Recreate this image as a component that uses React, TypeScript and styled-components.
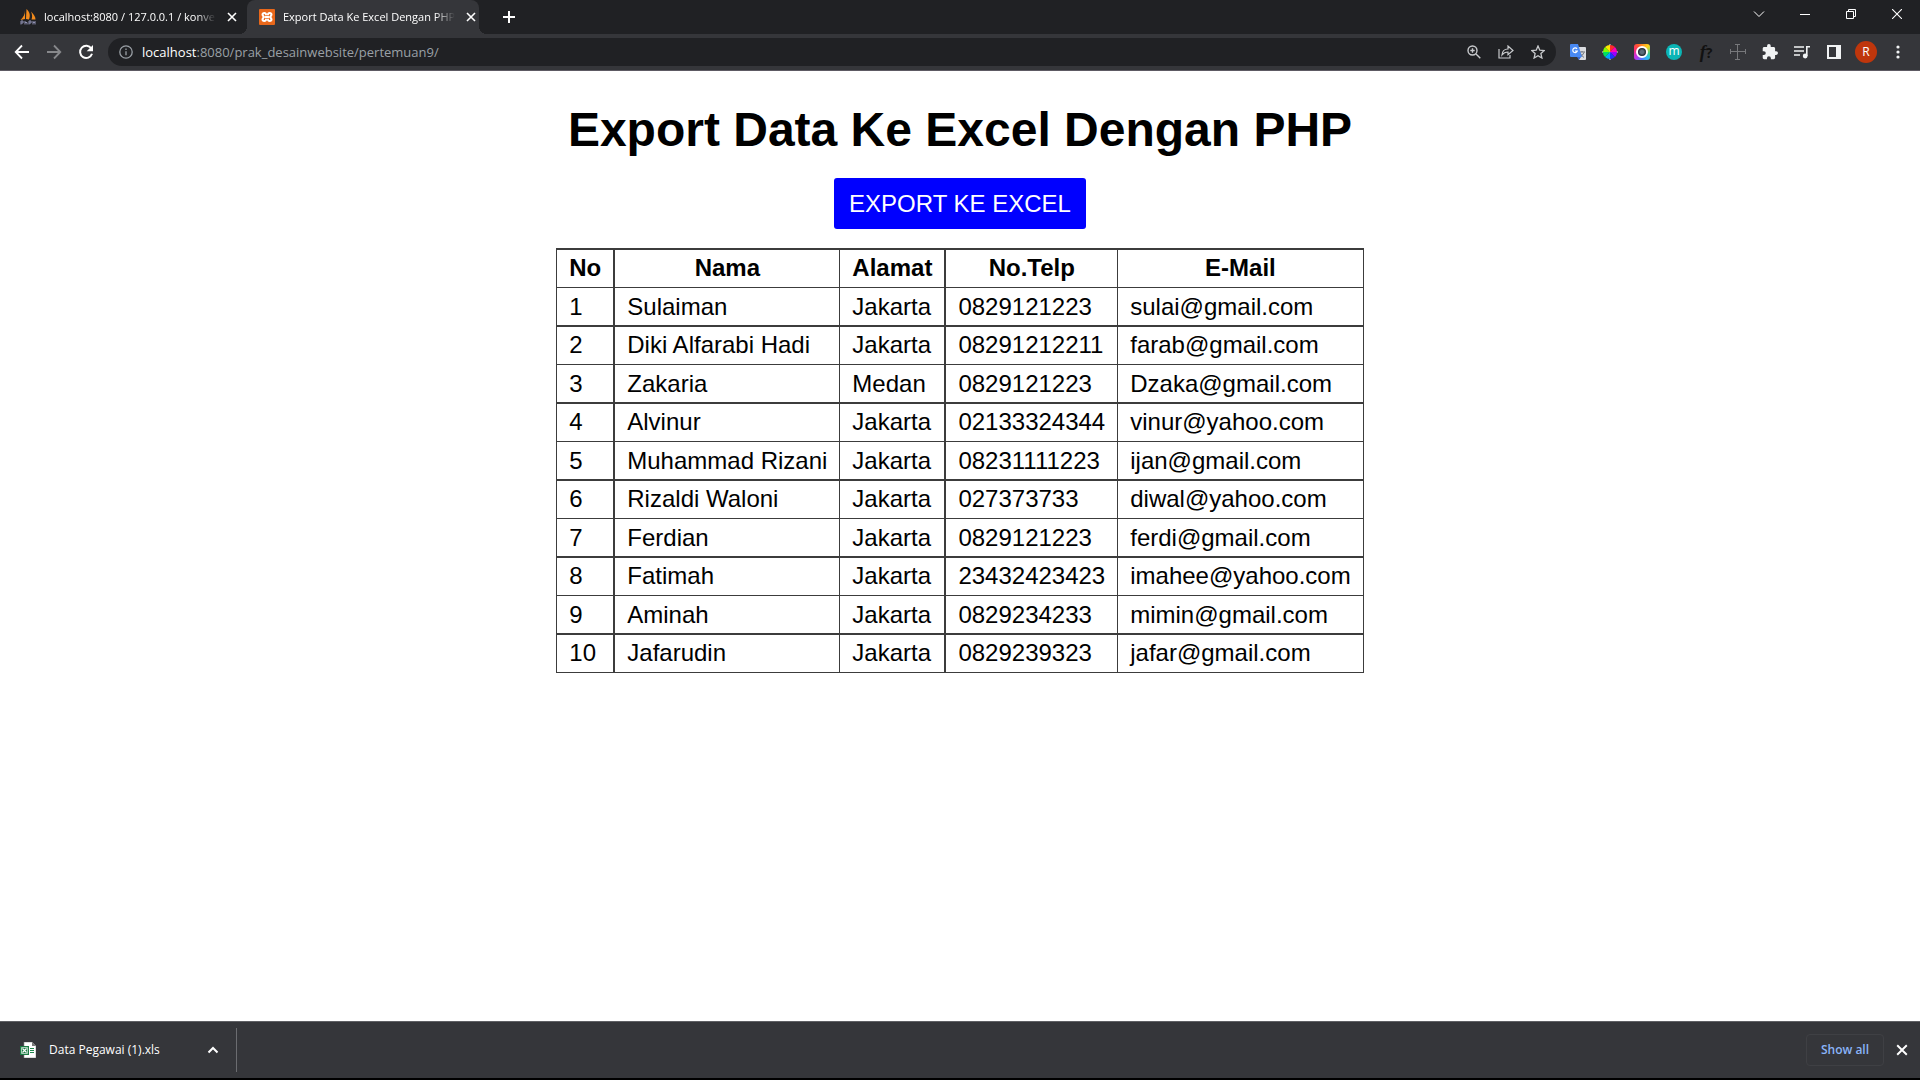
import React from 'react';
import styled, { createGlobalStyle, css } from 'styled-components';

const Global = createGlobalStyle`
  *, *::before, *::after { box-sizing: border-box; }
  body { margin: 0; background: #fff; }
  button, input { font: inherit; }
`;

const Screen = styled.div`
  min-height: 100vh;
  display: flex;
  flex-direction: column;
  border-bottom: 2px solid #000;
  font-family: 'Open Sans', 'Noto Sans', sans-serif;
  color: #fff;
`;

const TabStrip = styled.header`
  height: 34px;
  display: flex;
  align-items: stretch;
  background: #202124;
`;

const Tab = styled.div<{ $active?: boolean }>`
  position: relative;
  width: ${(p) => (p.$active ? 232 : 247)}px;
  display: flex;
  align-items: center;
  gap: 8px;
  padding: ${(p) => (p.$active ? '0 0 0 12px' : '0 7px 0 20px')};
  background: ${(p) => (p.$active ? '#35363a' : 'transparent')};
  border-radius: 8px 8px 0 0;
  font-size: 11px;
  line-height: 18px;

  ${(p) =>
    p.$active &&
    css`
      &::before,
      &::after {
        content: '';
        position: absolute;
        bottom: 0;
        width: 8px;
        height: 8px;
      }
      &::before {
        left: -8px;
        background: radial-gradient(circle at 0 0, #202124 8px, #35363a 8px);
      }
      &::after {
        right: -8px;
        background: radial-gradient(circle at 100% 0, #202124 8px, #35363a 8px);
      }
    `}
`;

const TabTitle = styled.span`
  flex: 1;
  min-width: 0;
  overflow: hidden;
  white-space: nowrap;
  mask-image: linear-gradient(to right, #000 calc(100% - 20px), transparent);
`;

const IconButton = styled.button<{ $w?: number }>`
  width: ${(p) => p.$w ?? 32}px;
  flex: none;
  display: flex;
  align-items: center;
  justify-content: center;
  padding: 0;
  border: 0;
  background: none;
  color: inherit;
`;

const WindowControls = styled.div`
  margin-left: auto;
  height: 28px;
  display: flex;
`;

const Toolbar = styled.nav`
  height: 37px;
  display: flex;
  align-items: center;
  padding: 0 6px;
  background: #35363a;
  border-bottom: 1px solid #5d5a63;
`;

const AddressBar = styled.div`
  flex: 1;
  height: 28px;
  margin: 0 6px;
  display: flex;
  align-items: center;
  padding: 0 2px 0 11px;
  border-radius: 14px;
  background: #202124;
  color: #c8cacd;
`;

const Url = styled.a`
  flex: 1;
  margin-left: 9px;
  font-size: 13px;
  line-height: 20px;
  color: #9aa0a6;
  text-decoration: none;
  b { font-weight: 400; color: #fff; }
`;

const Avatar = styled.span`
  width: 22px;
  height: 22px;
  border-radius: 50%;
  background: #bf360c;
  font-size: 12px;
  line-height: 22px;
  text-align: center;
`;

const Page = styled.main`
  flex: 1;
  display: flex;
  flex-direction: column;
  align-items: center;
  padding-top: 31px;
  color: #000;
  font-family: 'Liberation Sans', Arial, sans-serif;
  font-size: 24px;
  line-height: 27px;
`;

const Title = styled.h1`
  margin: 0;
  font-size: 48px;
  line-height: 56px;
`;

const ExportLink = styled.a`
  margin: 20px 0 19px;
  padding: 12px 15px;
  border-radius: 3px;
  background: #00f;
  color: #fff;
  text-decoration: none;
`;

const Table = styled.table`
  border-collapse: separate;
  border-spacing: 0;
  border: solid #3c3c3c;
  border-width: 2px 0 0 1px;

  th, td {
    padding: 5px 12px;
    border: solid #3c3c3c;
    border-width: 0 1px 1px 0;
    text-align: left;
    white-space: nowrap;
  }
  th { text-align: center; }
  th:nth-child(odd):not(:last-child), td:nth-child(odd):not(:last-child) { border-right-width: 2px; }
  th, tbody tr:nth-child(even) td { padding-top: 4px; padding-bottom: 6px; }
  tbody tr:nth-child(odd) td { border-bottom-width: 2px; }
`;

const Downloads = styled.footer`
  height: 57px;
  display: flex;
  align-items: center;
  padding: 0 6px 0 20px;
  background: #35363a;
  border-top: 1px solid #5f6064;
  font-size: 12px;
  line-height: 18px;
`;

const DownloadItem = styled.div`
  width: 217px;
  height: 44px;
  display: flex;
  align-items: center;
  gap: 13px;
  border-right: 1px solid #6b6c70;
`;

const FileName = styled.span`
  flex: 1;
`;

const ShowAll = styled.button`
  width: 78px;
  height: 32px;
  margin: 0 6px 0 auto;
  padding: 0;
  border: 1px solid #3f4044;
  border-radius: 4px;
  background: none;
  color: #8ab4f8;
  font-weight: 600;
`;

const Close = ({ size = 10 }: { size?: number }) => (
  <svg width={size} height={size} viewBox="0 0 10 10" stroke="currentColor" strokeWidth="1.6">
    <path d="M1 1l8 8M9 1l-8 8" />
  </svg>
);

const Sails = () => (
  <svg width="16" height="16" viewBox="0 0 16 16">
    <path d="M5 1.500C5 5 3.500 8 .5 11L5 10zM6.500 0C10 3 10.500 7 9 10.500L6 10zM11 2.500c3 3 4.500 5.500 4.500 8L11.500 10.500c1-2.500.8-5-.5-8z" fill="#f38b1c" />
    <path d="M1 15.500V12h2v2H1M5 12v3.500M5 13.500h2v2M9 12v3.500M9 12h2v2H9M13 12v3.500M15 12v3.500M13 13.500h2" stroke="#8f91b3" fill="none" />
  </svg>
);

const Xampp = () => (
  <svg width="16" height="16" viewBox="0 0 16 16">
    <rect width="16" height="16" rx="1" fill="#e9681b" />
    <path
      d="M7 5.500Q7 4 5.300 4T3.500 5.700L4.700 8 3.500 10.300Q3.500 12 5.300 12T7 10.500M9 5.500Q9 4 10.700 4T12.500 5.700L11.300 8 12.500 10.300Q12.500 12 10.700 12T9 10.500M6.500 8h3"
      stroke="#fff"
      strokeWidth="2"
      fill="none"
      strokeLinejoin="round"
      strokeLinecap="round"
    />
  </svg>
);

const Arrow = ({ back }: { back?: boolean }) => (
  <svg width="16" height="16" viewBox="0 0 16 16" fill="none" stroke={back ? '#fff' : '#87888b'} strokeWidth="1.8">
    <path d={back ? 'M15 8H2M8 1.500L1.700 8 8 14.500' : 'M1 8h13M8 1.500L14.300 8 8 14.500'} />
  </svg>
);

const Reload = () => (
  <svg width="16" height="16" viewBox="0 0 16 16">
    <path d="M13.300 4.500A6.100 6.100 0 1 0 14 9.800" fill="none" stroke="#fff" strokeWidth="2" />
    <path d="M15 1v6.300H8.700z" fill="#fff" />
  </svg>
);

const Info = () => (
  <svg width="14" height="14" viewBox="0 0 14 14" fill="none" stroke="#9aa0a6" strokeWidth="1.3">
    <circle cx="7" cy="7" r="6.200" />
    <path d="M7 6.200v4M7 3.500v1.400" />
  </svg>
);

const ZoomIn = () => (
  <svg width="14" height="14" viewBox="0 0 14 14" fill="none" stroke="currentColor" strokeWidth="1.400">
    <circle cx="5.500" cy="5.500" r="4.500" />
    <path d="M9 9l4.300 4.300M3.300 5.500h4.400M5.500 3.300v4.400" />
  </svg>
);

const Share = () => (
  <svg width="16" height="14" viewBox="0 0 16 14" fill="none" stroke="currentColor" strokeWidth="1.200">
    <path d="M1 4v9h11v-3M4 10c.3-4 2.700-6 6-6V1l5 4.500-5 4.300V7C7.500 7 5.500 8 4 10z" />
  </svg>
);

const Star = () => (
  <svg width="14" height="14" viewBox="0 0 14 14" fill="none" stroke="currentColor" strokeWidth="1.300">
    <path d="M7 1l1.800 4.200 4.500.4-3.400 3 1 4.400L7 10.700 3.100 13l1-4.400-3.400-3 4.500-.4z" />
  </svg>
);

const Translate = () => (
  <svg width="16" height="16" viewBox="0 0 16 16">
    <path d="M6 3h9q1 0 1 1v11q0 1-1 1H9z" fill="#dadce0" />
    <path d="M9 8h6M12 7v1M10 8.500q1 3 4 5M14 8.500q-1 3-4 4" stroke="#70757a" fill="none" />
    <path d="M1 0h7l4 13H1q-1 0-1-1V1q0-1 1-1z" fill="#4889f4" />
    <path d="M7 13h4l-2 3z" fill="#3367d6" />
    <path d="M7 4.900A2.300 2.300 0 1 0 7.300 7H5" fill="none" stroke="#fff" strokeWidth="1.200" />
  </svg>
);

const wheel = ['#ff2b2b', '#ff00b8', '#9900ff', '#2030ff', '#00a8ff', '#00e060', '#7fff00', '#ffe600'];
const Wheel = () => (
  <svg width="16" height="16" viewBox="-8 -8 16 16">
    <path d="M-8 0H8M0-8V8" stroke="#8a8a8a" strokeWidth="2" />
    {wheel.map((c, i) => (
      <path key={c} d="M0 0L0 -7A7 7 0 0 1 5 -5z" fill={c} transform={`rotate(${i * 45})`} />
    ))}
  </svg>
);

const Lens = styled.span`
  width: 16px;
  height: 16px;
  display: flex;
  align-items: center;
  justify-content: center;
  border-radius: 3px;
  background: conic-gradient(#ff8a1c, #ffd21c 45deg, #3fd08a 100deg, #28c0f0 135deg, #4a7bff 180deg, #c430e8 230deg, #ff2f6c 290deg, #ff5a2c 330deg, #ff8a1c);

  &::before {
    content: '';
    width: 12px;
    height: 12px;
    border: 2px solid #fff;
    border-radius: 50%;
    background: radial-gradient(#5b6b78 30%, #1f2830 65%);
  }
`;

const Round = styled.span`
  width: 16px;
  height: 16px;
  border-radius: 50%;
  background: #0bb5b5;
  font-size: 12px;
  line-height: 14px;
  text-align: center;
`;

const Formula = styled.span`
  font: italic 700 18px/20px 'Liberation Serif', serif;
  color: #111;
  b { font: 700 14px/20px 'Open Sans', sans-serif; }
`;

const Crosshair = () => (
  <svg width="16" height="16" viewBox="0 0 16 16" stroke="#77787b" fill="none">
    <path d="M0 7.500h6M10 7.500h6M7.500 0v6M7.500 10v6M5 .5h5M5 15.500h5M.5 5v5M15.500 5v5M6 7.500h4M7.500 6v4" />
  </svg>
);

const Puzzle = () => (
  <svg width="16" height="16" viewBox="1 1 22 22" fill="#f1f3f4">
    <path d="M20.500 11H19V7c0-1.100-.9-2-2-2h-4V3.500a2.500 2.500 0 0 0-5 0V5H4c-1.100 0-2 .9-2 2v3.800h1.500a2.700 2.700 0 0 1 0 5.400H2V20c0 1.100.9 2 2 2h3.800v-1.500a2.700 2.700 0 0 1 5.400 0V22H17c1.100 0 2-.9 2-2v-4h1.500a2.500 2.500 0 0 0 0-5z" />
  </svg>
);

const Queue = () => (
  <svg width="16" height="14" viewBox="0 0 16 14" fill="none" stroke="#f1f3f4" strokeWidth="1.600">
    <path d="M0 2h10M0 6h10M0 10h6M12.800 11V1.800H16" />
    <circle cx="11.200" cy="11" r="1.600" fill="#f1f3f4" />
  </svg>
);

const Panel = () => (
  <svg width="14" height="14" viewBox="0 0 14 14">
    <path d="M0 0h14v14H0zM2 2v10h7V2z" fill="#f1f3f4" fillRule="evenodd" />
  </svg>
);

const Dots = () => (
  <svg width="4" height="14" viewBox="0 0 4 14" fill="#f1f3f4">
    <circle cx="2" cy="2" r="1.600" />
    <circle cx="2" cy="7" r="1.600" />
    <circle cx="2" cy="12" r="1.600" />
  </svg>
);

const ExcelFile = () => (
  <svg width="16" height="16" viewBox="0 0 16 16">
    <path d="M4 0h8l4 4v12H4z" fill="#fff" stroke="#8a8a8a" strokeWidth=".6" />
    <path d="M12 0v4h4z" fill="#777" />
    <path d="M10 6.500h4M10 8.500h4M10 10.500h4" stroke="#21864c" />
    <path d="M0 4h9v9H0z" fill="#1b7a43" />
    <path d="M1.500 5.500h6v6h-6z" fill="none" stroke="#cfe5d8" strokeWidth=".8" />
    <path d="M2.500 6.500l4 4M6.500 6.500l-4 4" stroke="#fff" strokeWidth="1.200" />
  </svg>
);

const Chevron = ({ up }: { up?: boolean }) => (
  <svg width="12" height="8" viewBox="0 0 12 8" fill="none" stroke="currentColor" strokeWidth={up ? 2 : 1}>
    <path d={up ? 'M1.500 6.500L6 2l4.500 4.500' : 'M1 1.500l5 5 5-5'} />
  </svg>
);

const columns = ['No', 'Nama', 'Alamat', 'No.Telp', 'E-Mail'];
const rows = [
  ['Sulaiman', 'Jakarta', '0829121223', 'sulai@gmail.com'],
  ['Diki Alfarabi Hadi', 'Jakarta', '08291212211', 'farab@gmail.com'],
  ['Zakaria', 'Medan', '0829121223', 'Dzaka@gmail.com'],
  ['Alvinur', 'Jakarta', '02133324344', 'vinur@yahoo.com'],
  ['Muhammad Rizani', 'Jakarta', '08231111223', 'ijan@gmail.com'],
  ['Rizaldi Waloni', 'Jakarta', '027373733', 'diwal@yahoo.com'],
  ['Ferdian', 'Jakarta', '0829121223', 'ferdi@gmail.com'],
  ['Fatimah', 'Jakarta', '23432423423', 'imahee@yahoo.com'],
  ['Aminah', 'Jakarta', '0829234233', 'mimin@gmail.com'],
  ['Jafarudin', 'Jakarta', '0829239323', 'jafar@gmail.com'],
];

export default function App() {
  return (
    <Screen>
      <Global />
      <TabStrip>
        <Tab>
          <Sails />
          <TabTitle>localhost:8080 / 127.0.0.1 / konve</TabTitle>
          <IconButton $w={16} aria-label="Close tab"><Close /></IconButton>
        </Tab>
        <Tab $active>
          <Xampp />
          <TabTitle>Export Data Ke Excel Dengan PHP</TabTitle>
          <IconButton $w={16} aria-label="Close tab"><Close /></IconButton>
        </Tab>
        <IconButton $w={60} aria-label="New tab">
          <svg width="12" height="12" viewBox="0 0 12 12" stroke="#fff" strokeWidth="2"><path d="M6 0v12M0 6h12" /></svg>
        </IconButton>
        <WindowControls>
          <IconButton $w={46} aria-label="Search tabs"><Chevron /></IconButton>
          <IconButton $w={46} aria-label="Minimize">
            <svg width="10" height="10" viewBox="0 0 10 10" stroke="#fff"><path d="M0 5.500h10" /></svg>
          </IconButton>
          <IconButton $w={46} aria-label="Restore">
            <svg width="10" height="10" viewBox="0 0 10 10" stroke="#fff" fill="none"><path d="M.5 2.500h7v7h-7zM2.500 2.500v-2h7v7h-2" /></svg>
          </IconButton>
          <IconButton $w={46} aria-label="Close window">
            <svg width="10" height="10" viewBox="0 0 10 10" stroke="#fff" strokeWidth="1.100"><path d="M0 0l10 10M10 0L0 10" /></svg>
          </IconButton>
        </WindowControls>
      </TabStrip>
      <Toolbar>
        <IconButton aria-label="Back"><Arrow back /></IconButton>
        <IconButton aria-label="Forward"><Arrow /></IconButton>
        <IconButton aria-label="Reload"><Reload /></IconButton>
        <AddressBar>
          <Info />
          <Url href="#"><b>localhost</b>:8080/prak_desainwebsite/pertemuan9/</Url>
          <IconButton aria-label="Zoom"><ZoomIn /></IconButton>
          <IconButton aria-label="Share"><Share /></IconButton>
          <IconButton aria-label="Bookmark"><Star /></IconButton>
        </AddressBar>
        <IconButton aria-label="Translate"><Translate /></IconButton>
        <IconButton aria-label="Color picker"><Wheel /></IconButton>
        <IconButton aria-label="Screenshot"><Lens /></IconButton>
        <IconButton><Round>m</Round></IconButton>
        <IconButton><Formula>f<b>?</b></Formula></IconButton>
        <IconButton aria-label="Measure"><Crosshair /></IconButton>
        <IconButton aria-label="Extensions"><Puzzle /></IconButton>
        <IconButton aria-label="Media"><Queue /></IconButton>
        <IconButton aria-label="Side panel"><Panel /></IconButton>
        <IconButton><Avatar>R</Avatar></IconButton>
        <IconButton aria-label="Menu"><Dots /></IconButton>
      </Toolbar>
      <Page>
        <Title>Export Data Ke Excel Dengan PHP</Title>
        <ExportLink href="#">EXPORT KE EXCEL</ExportLink>
        <Table>
          <thead>
            <tr>{columns.map((c) => <th key={c}>{c}</th>)}</tr>
          </thead>
          <tbody>
            {rows.map((r, i) => (
              <tr key={i}>
                <td>{i + 1}</td>
                {r.map((v, j) => <td key={j}>{v}</td>)}
              </tr>
            ))}
          </tbody>
        </Table>
      </Page>
      <Downloads>
        <DownloadItem>
          <ExcelFile />
          <FileName>Data Pegawai (1).xls</FileName>
          <IconButton $w={46} aria-label="Download options"><Chevron up /></IconButton>
        </DownloadItem>
        <ShowAll>Show all</ShowAll>
        <IconButton $w={24} aria-label="Close downloads"><Close size={12} /></IconButton>
      </Downloads>
    </Screen>
  );
}
